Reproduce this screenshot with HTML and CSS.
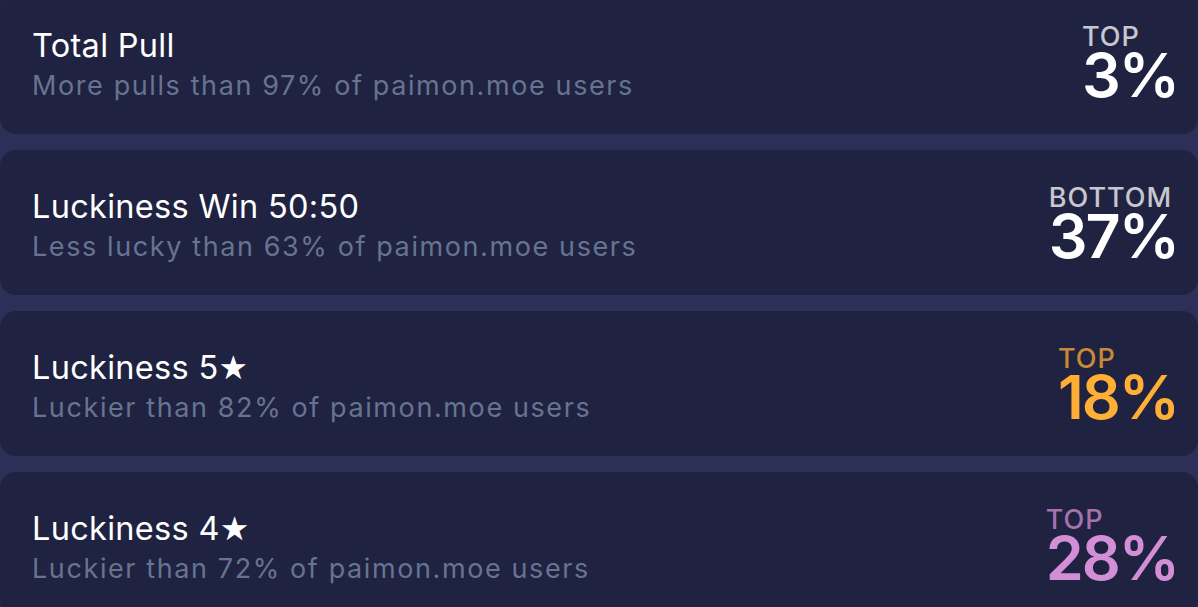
FILE: index.html
```html
<!DOCTYPE html>
<html>
<head>
    <title>Summary - paimon.moe</title>
    <link rel="stylesheet" href="styles.css">
</head>
<body>
    <div class="list">
        <div class="card">
            <div class="info">
                <div class="title">Total Pull</div>
                <div class="subtitle">More pulls than 97% of paimon.moe users</div>
            </div>
            <div class="rank">
                <div class="rank-label">TOP</div>
                <div class="rank-value">3%</div>
            </div>
        </div>
        <div class="card">
            <div class="info">
                <div class="title">Luckiness Win 50:50</div>
                <div class="subtitle">Less lucky than 63% of paimon.moe users</div>
            </div>
            <div class="rank">
                <div class="rank-label">BOTTOM</div>
                <div class="rank-value">37%</div>
            </div>
        </div>
        <div class="card">
            <div class="info">
                <div class="title">Luckiness 5<span class="star">★</span></div>
                <div class="subtitle">Luckier than 82% of paimon.moe users</div>
            </div>
            <div class="rank legendary">
                <div class="rank-label">TOP</div>
                <div class="rank-value">18%</div>
            </div>
        </div>
        <div class="card">
            <div class="info">
                <div class="title">Luckiness 4<span class="star">★</span></div>
                <div class="subtitle">Luckier than 72% of paimon.moe users</div>
            </div>
            <div class="rank rare">
                <div class="rank-label">TOP</div>
                <div class="rank-value">28%</div>
            </div>
        </div>
    </div>
</body>
</html>
```

FILE: styles.css
```css
body {
    background-color: #2c3058;
    color: #ffffff;
    font-family: "Inter", "Liberation Sans", sans-serif;
    margin: 0;
    overflow: hidden;
}
.list {
    display: flex;
    flex-direction: column;
    gap: 16px;
    margin-top: -11px;
}
.card {
    display: flex;
    justify-content: space-between;
    align-items: flex-start;
    height: 145px;
    box-sizing: border-box;
    padding: 32px 20px 0 32px;
    background-color: #202241;
    border-radius: 16px;
}
.info {
    margin-top: 5px;
}
.title {
    font-size: 32.5px;
    line-height: 40px;
    letter-spacing: 0.3px;
    color: #ffffff;
}
.star {
    font-family: "DejaVu Sans", sans-serif;
    font-size: 33px;
}
.subtitle {
    font-size: 27px;
    line-height: 39px;
    letter-spacing: 1.6px;
    color: #667491;
}
.rank {
    display: flex;
    flex-direction: column;
    align-items: flex-start;
    color: #ffffff;
}
.rank-label {
    font-size: 27px;
    line-height: 32px;
    letter-spacing: 1px;
    font-weight: 500;
    opacity: 0.75;
}
.rank-value {
    font-size: 61px;
    line-height: 45px;
    letter-spacing: -2px;
    font-weight: 600;
}
.legendary { color: #ffae36; }
.rare { color: #d28fd6; }
```
